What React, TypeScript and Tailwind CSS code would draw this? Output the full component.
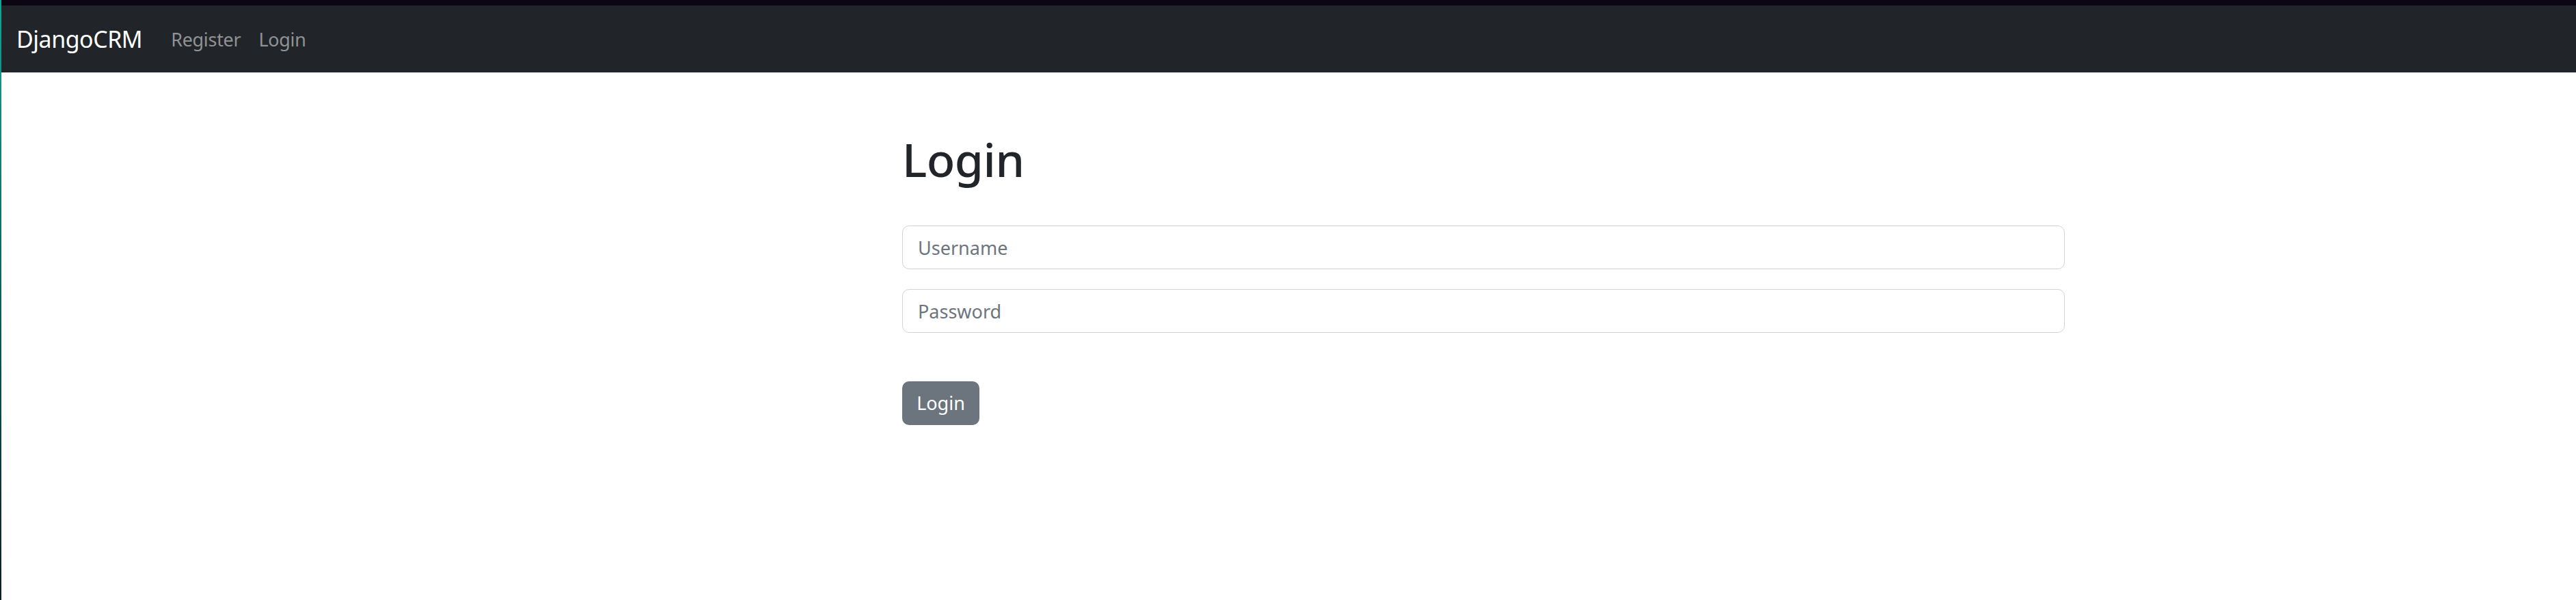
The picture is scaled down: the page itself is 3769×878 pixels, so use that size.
import React from 'react';

const font = { fontFamily: '"Noto Sans", "Open Sans", sans-serif' };

export default function App() {
  const navLinks = ['Register', 'Login'];

  return (
    <div className="min-h-[878px] bg-white flex" style={font}>
      {/* window edge */}
      <div className="w-[2px] shrink-0 bg-gradient-to-b from-[#12a595] via-[#0d5f5c] to-[#0a1f26]" />

      <div className="flex-1 flex flex-col">
        {/* window top strip */}
        <div className="h-[8px] bg-[#0b0514]" />

        {/* Navbar */}
        <nav className="h-[98px] bg-[#212529] flex items-center px-[22px]">
          <span className="text-[34px] text-white leading-none tracking-[-0.5px]">DjangoCRM</span>
          <div className="flex items-center gap-[26px] ml-[42px]">
            {navLinks.map((label) => (
              <a key={label} href="#" className="text-[27px] text-[#909294] leading-none tracking-[-0.3px]">
                {label}
              </a>
            ))}
          </div>
        </nav>

        {/* Login form */}
        <main className="ml-[1318px] w-[1701px] pt-[85px]">
          <h1 className="text-[68px] font-medium text-[#212529] leading-[84px] tracking-[-0.5px]">Login</h1>
          <form className="mt-[55px] flex flex-col">
            <input
              type="text"
              placeholder="Username"
              className="h-[64px] w-full rounded-[10px] border border-[#ced4da] px-[22px] text-[27px] text-[#212529] placeholder:text-[#6c757d] outline-none"
              style={font}
            />
            <input
              type="password"
              placeholder="Password"
              className="mt-[29px] h-[64px] w-full rounded-[10px] border border-[#ced4da] px-[22px] text-[27px] text-[#212529] placeholder:text-[#6c757d] outline-none"
              style={font}
            />
            <div className="mt-[71px]">
              <button
                type="button"
                className="h-[64px] w-[113px] rounded-[10px] bg-[#6c757d] text-white text-[27px] flex items-center justify-center"
                style={font}
              >
                Login
              </button>
            </div>
          </form>
        </main>
      </div>
    </div>
  );
}
